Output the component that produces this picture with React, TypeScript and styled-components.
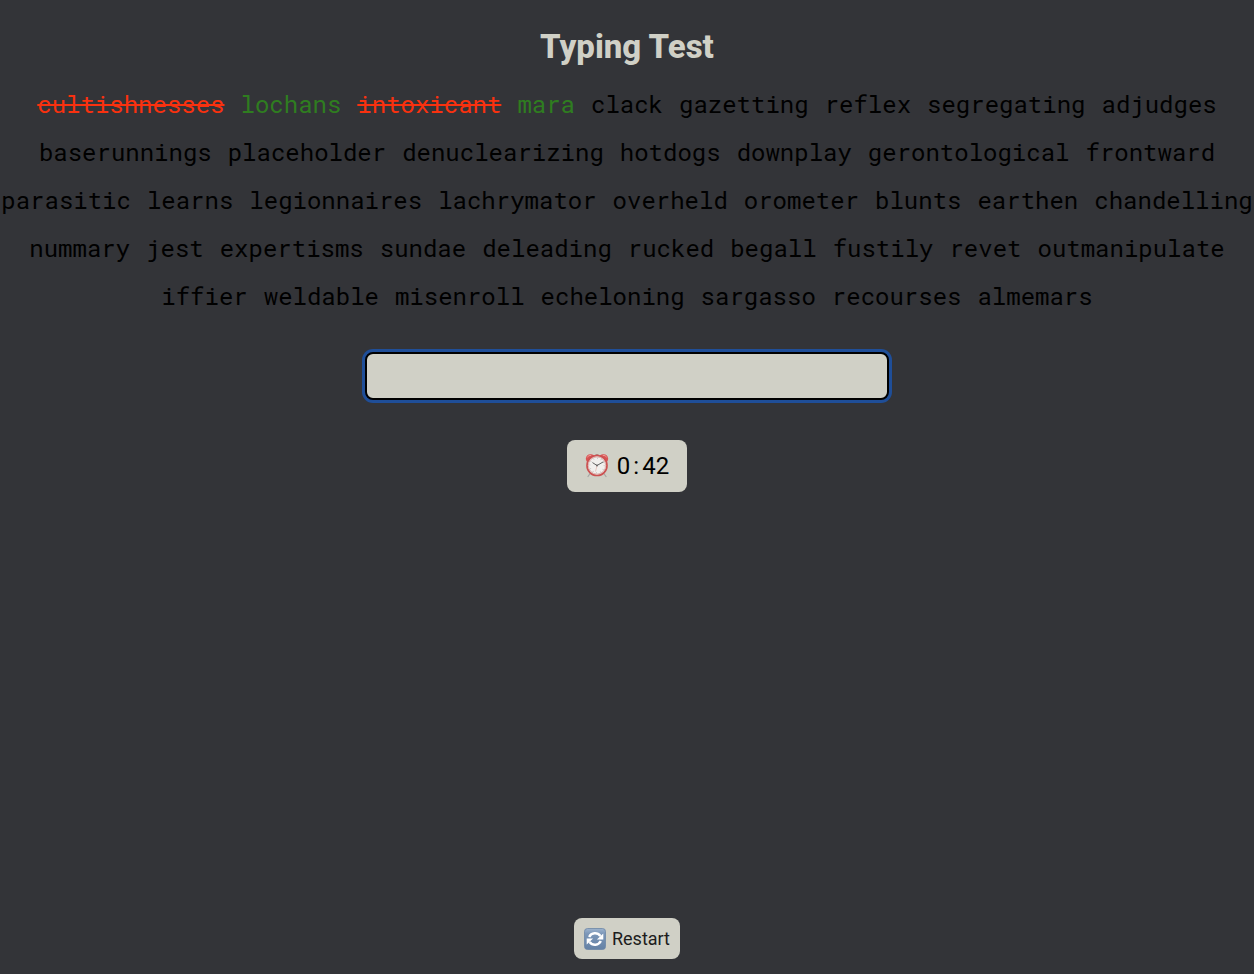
import React, { useState } from "react";
import styled, { createGlobalStyle } from "styled-components";

const GlobalStyle = createGlobalStyle`
  * { box-sizing: border-box; }
  body {
    margin: 0;
    background: #333438;
    color: #000;
    font-family: Roboto, sans-serif;
  }
`;

const Page = styled.main`
  min-height: 100vh;
  padding: 24px 0 15px;
  display: flex;
  flex-direction: column;
  align-items: center;
`;

const Title = styled.h1`
  margin: 0 0 10px;
  color: #d0d0c6;
  font-size: 33px;
  line-height: 46px;
  font-weight: 800;
`;

const WordList = styled.div`
  align-self: stretch;
  display: flex;
  flex-wrap: wrap;
  justify-content: center;
  column-gap: 16px;
  font-family: "Roboto Mono", "Liberation Mono", monospace;
  font-size: 24px;
  line-height: 48px;
`;

type Status = "wrong" | "right" | "pending";

const wordColors: Record<Status, string> = {
  wrong: "#f9310f",
  right: "#2f7d20",
  pending: "#000",
};

const Word = styled.span<{ $status: Status }>`
  color: ${({ $status }) => wordColors[$status]};
  text-decoration: ${({ $status }) => ($status === "wrong" ? "line-through" : "none")};
  text-decoration-thickness: 2px;
`;

const TypingInput = styled.input`
  width: 524px;
  max-width: calc(100% - 32px);
  height: 48px;
  margin: 32px 0 40px;
  padding: 0 16px;
  border: 2px solid #000;
  border-radius: 8px;
  outline: 0;
  box-shadow: 0 0 0 3px #1f4e98;
  background: #d0d0c6;
  text-align: center;
  font: 24px Roboto, sans-serif;
`;

const Timer = styled.div`
  display: flex;
  align-items: center;
  gap: 8px;
  padding: 0 18px;
  border-radius: 8px;
  background: #d0d0c6;
  font-size: 24px;
  line-height: 52px;
`;

const Colon = styled.span`
  margin: 0 3px;
`;

const RestartButton = styled.button`
  display: flex;
  align-items: center;
  gap: 6px;
  margin-top: auto;
  padding: 0 10px;
  border: 0;
  border-radius: 8px;
  background: #d0d0c6;
  color: #1c1c1c;
  font-family: Roboto, sans-serif;
  font-size: 18px;
  line-height: 41px;
`;

const words =
  "cultishnesses lochans intoxicant mara clack gazetting reflex segregating adjudges baserunnings placeholder denuclearizing hotdogs downplay gerontological frontward parasitic learns legionnaires lachrymator overheld orometer blunts earthen chandelling nummary jest expertisms sundae deleading rucked begall fustily revet outmanipulate iffier weldable misenroll echeloning sargasso recourses almemars".split(" ");

const results: Status[] = ["wrong", "right", "wrong", "right"];

function AlarmClock() {
  return (
    <svg width="24" height="26" viewBox="0 0 24 26" aria-hidden="true">
      <path d="M5.500 20l-2.500 3.500M18.500 20l2.500 3.500" stroke="#a5a5a3" strokeWidth="1.200" strokeLinecap="round" />
      <path d="M12 3V1.500M10.500 1.500h3" stroke="#b08a86" strokeWidth="1" />
      <path d="M1.200 7.500C-.2 4 2.500.8 6 1.200c1.900.2 3.200 1 4 2.100L2.500 9.500Z" fill="#d95354" />
      <path d="M22.800 7.500c1.400-3.500-1.300-6.700-4.800-6.300-1.900.2-3.200 1-4 2.100l7.500 6.200Z" fill="#d95354" />
      <path d="M2.200 4.500c.8-1.700 2.300-2.300 4-2M21.800 4.500c-.8-1.700-2.300-2.300-4-2" stroke="#ee9a94" fill="none" />
      <circle cx="12" cy="12.500" r="10" fill="#dedddb" stroke="#cc5151" strokeWidth="1.700" />
      <circle cx="12" cy="12.500" r="8.600" fill="#f1efed" stroke="#dca5a1" strokeWidth=".8" />
      <circle cx="12" cy="12.500" r="7.200" fill="none" stroke="#b8b4b2" strokeWidth="1.300" strokeDasharray=".6 3.170" />
      <path d="M7.800 9.800L12 12.500l6-3.500" fill="none" stroke="#626262" strokeWidth="1" strokeLinecap="round" />
      <path d="M12 12.500l-1.500 6" stroke="#df9a91" strokeWidth=".5" />
      <circle cx="12" cy="12.500" r=".9" fill="#626262" />
    </svg>
  );
}

function RefreshIcon() {
  return (
    <svg width="22" height="22" viewBox="0 0 22 22" aria-hidden="true">
      <defs>
        <linearGradient id="tile" x1="0" y1="0" x2="0" y2="1">
          <stop offset="0" stopColor="#9db3cd" />
          <stop offset=".25" stopColor="#7c97b8" />
          <stop offset="1" stopColor="#6481a5" />
        </linearGradient>
      </defs>
      <rect x=".5" y=".5" width="21" height="21" rx="3" fill="url(#tile)" stroke="#6c87a6" strokeWidth=".8" />
      <path d="M5.200 9C7.300 4.600 13.300 4 16.400 8M16.800 13C14.700 17.400 8.700 18 5.600 14" fill="none" stroke="#fff" strokeWidth="2.500" />
      <path d="M19.300 5.600v5.900h-6.400ZM2.700 16.400v-5.900h6.400Z" fill="#fff" />
    </svg>
  );
}

export default function App() {
  const [value, setValue] = useState("");
  return (
    <>
      <GlobalStyle />
      <Page>
        <Title>Typing Test</Title>
        <WordList>
          {words.map((word, i) => (
            <Word key={word} $status={results[i] ?? "pending"}>
              {word}
            </Word>
          ))}
        </WordList>
        <TypingInput
          type="text"
          aria-label="Type the words"
          autoComplete="off"
          value={value}
          onChange={(e) => setValue(e.target.value)}
        />
        <Timer role="timer">
          <AlarmClock />
          <span>
            0<Colon>:</Colon>42
          </span>
        </Timer>
        <RestartButton type="button" onClick={() => setValue("")}>
          <RefreshIcon />
          <span>Restart</span>
        </RestartButton>
      </Page>
    </>
  );
}
